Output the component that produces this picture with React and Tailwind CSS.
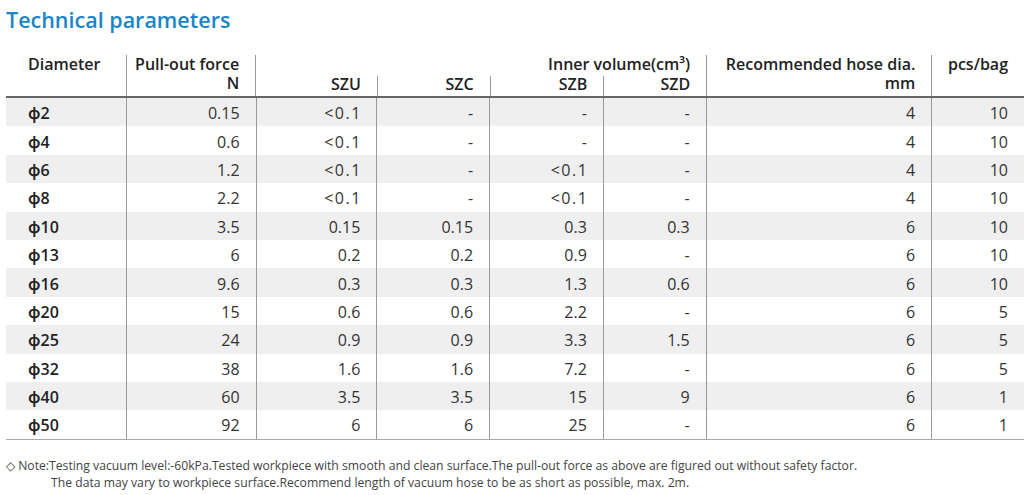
import React from 'react';

// column widths (px) — Diameter, Pull-out, SZU, SZC, SZB, SZD, Hose, pcs/bag
const W = ['w-[120px]', 'w-[130px]', 'w-[121px]', 'w-[113px]', 'w-[114px]', 'w-[103px]', 'w-[226px]', 'w-[93px]'];

const rows = [
  ['ϕ2', '0.15', '<0.1', '-', '-', '-', '4', '10'],
  ['ϕ4', '0.6', '<0.1', '-', '-', '-', '4', '10'],
  ['ϕ6', '1.2', '<0.1', '-', '<0.1', '-', '4', '10'],
  ['ϕ8', '2.2', '<0.1', '-', '<0.1', '-', '4', '10'],
  ['ϕ10', '3.5', '0.15', '0.15', '0.3', '0.3', '6', '10'],
  ['ϕ13', '6', '0.2', '0.2', '0.9', '-', '6', '10'],
  ['ϕ16', '9.6', '0.3', '0.3', '1.3', '0.6', '6', '10'],
  ['ϕ20', '15', '0.6', '0.6', '2.2', '-', '6', '5'],
  ['ϕ25', '24', '0.9', '0.9', '3.3', '1.5', '6', '5'],
  ['ϕ32', '38', '1.6', '1.6', '7.2', '-', '6', '5'],
  ['ϕ40', '60', '3.5', '3.5', '15', '9', '6', '1'],
  ['ϕ50', '92', '6', '6', '25', '-', '6', '1'],
];

const fmt = (v) => (v.startsWith('<') ? <span className="tracking-[1.5px] -mr-[1.5px]">{v}</span> : v);

export default function App() {
  return (
    <div className="w-[1030px] h-[495px] bg-white px-[6px] text-[#333]" style={{ fontFamily: '"Open Sans", "Noto Sans", sans-serif' }}>
      <h1 className="pt-[5px] h-[55px] text-[21.5px] font-semibold text-[#1a86c6] leading-[30px]">Technical parameters</h1>

      {/* --- HEADER --- */}
      <div className="flex h-[43px] border-b-2 border-[#666] text-[16px] font-semibold text-[#222] leading-[19px]">
        <div className={`${W[0]} pl-[22px]`}>Diameter</div>
        <div className={`${W[1]} border-l border-[#999] pr-[16px] text-right`}>
          <div>Pull-out force</div>
          <div>N</div>
        </div>
        <div className="w-[451px] border-l border-[#999] flex flex-col">
          <div className="h-[21px] pr-[16px] text-right">Inner volume(cm³)</div>
          <div className="flex flex-1 leading-[17px]">
            <div className={`${W[2]} pr-[16px] text-right`}>SZU</div>
            <div className={`${W[3]} border-l border-[#999] pr-[16px] text-right`}>SZC</div>
            <div className={`${W[4]} border-l border-[#999] pr-[16px] text-right`}>SZB</div>
            <div className={`${W[5]} border-l border-[#999] pr-[16px] text-right`}>SZD</div>
          </div>
        </div>
        <div className={`${W[6]} border-l border-[#999] pr-[16px] text-right`}>
          <div>Recommended hose dia.</div>
          <div>mm</div>
        </div>
        <div className={`${W[7]} border-l border-[#999] pr-[16px] text-right`}>
          <div>pcs/bag</div>
        </div>
      </div>

      {/* --- BODY --- */}
      <div className="border-b border-[#aaa]">
        {rows.map((r, i) => (
          <div key={r[0]} className={`flex h-[28.4px] items-center text-[16px] ${i % 2 === 0 ? 'bg-[#efefef]' : 'bg-white'}`}>
            {r.map((v, j) => (
              <div
                key={j}
                className={`${W[j]} h-full flex items-center pt-[2px] ${j === 0 ? 'pl-[22px] font-semibold text-[#222]' : 'justify-end pr-[16px] border-l border-[#999]'}`}
              >
                {fmt(v)}
              </div>
            ))}
          </div>
        ))}
      </div>

      {/* --- NOTE --- */}
      <div className="mt-[17px] text-[12.2px] leading-[17px] text-[#444]">
        <div>◇ Note:Testing vacuum level:-60kPa.Tested workpiece with smooth and clean surface.The pull-out force as above are figured out without safety factor.</div>
        <div className="pl-[45px]">The data may vary to workpiece surface.Recommend length of vacuum hose to be as short as possible, max. 2m.</div>
      </div>
    </div>
  );
}
